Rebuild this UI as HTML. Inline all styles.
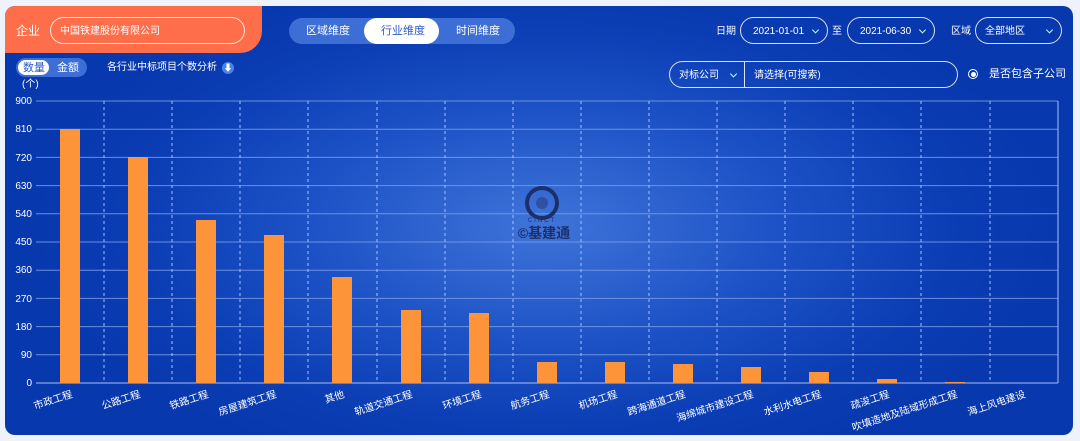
<!DOCTYPE html>
<html><head><meta charset="utf-8"><style>
body{margin:0;width:1080px;height:441px;background:#eef3fb;font-family:"Liberation Sans","Noto Sans CJK SC",sans-serif;overflow:hidden;position:relative}
.card{position:absolute;left:5px;top:6px;width:1068px;height:429px;border-radius:10px;background:radial-gradient(ellipse 520px 260px at 540px 220px,#3f74d9 0%,#1d52c6 45%,#0a3cb3 80%,#0838ad 100%);overflow:hidden}
.org{position:absolute;left:5px;top:6px;width:257px;height:47px;background:#fe6e4a;border-bottom-right-radius:22px;border-top-left-radius:10px}
.abs{position:absolute;color:#fff;font-size:11px;line-height:1}
.pill{position:absolute;border:1px solid rgba(255,255,255,.85);border-radius:14px;box-sizing:border-box;color:#fff;font-size:10px;line-height:1}
.arr{position:absolute;right:9px;top:50%;width:4px;height:4px;border-right:1px solid #cfe;border-bottom:1px solid #cfe;transform:translateY(-70%) rotate(45deg)}
</style></head><body>
<div class="card"></div>
<div class="org"></div>
<div class="abs" style="left:16px;top:25px;font-size:12px">企业</div>
<div class="pill" style="left:50px;top:17px;width:195px;height:27px"><span style="position:absolute;left:9px;top:9px">中国铁建股份有限公司</span></div>
<div style="position:absolute;left:289px;top:18px;width:226px;height:26px;border-radius:13px;background:#3c6ed6"></div>
<div style="position:absolute;left:364px;top:18px;width:75px;height:26px;border-radius:13px;background:#fff"></div>
<div class="abs" style="left:306px;top:26px">区域维度</div>
<div class="abs" style="left:381px;top:26px;color:#2a5ac8">行业维度</div>
<div class="abs" style="left:456px;top:26px">时间维度</div>
<div class="abs" style="left:716px;top:27px;font-size:10px">日期</div>
<div class="pill" style="left:740px;top:17px;width:88px;height:27px"><span style="position:absolute;left:12px;top:9px">2021-01-01</span><i class="arr"></i></div>
<div class="abs" style="left:832px;top:27px;font-size:10px">至</div>
<div class="pill" style="left:847px;top:17px;width:88px;height:27px"><span style="position:absolute;left:12px;top:9px">2021-06-30</span><i class="arr"></i></div>
<div class="abs" style="left:951px;top:27px;font-size:10px">区域</div>
<div class="pill" style="left:975px;top:17px;width:87px;height:27px"><span style="position:absolute;left:9px;top:9px">全部地区</span><i class="arr"></i></div>
<div style="position:absolute;left:16px;top:58px;width:71px;height:19px;border-radius:10px;background:#3c6ed6"></div>
<div style="position:absolute;left:18px;top:60px;width:31px;height:15px;border-radius:8px;background:#fff"></div>
<div class="abs" style="left:23px;top:63px;color:#2a5ac8">数量</div>
<div class="abs" style="left:57px;top:63px">金额</div>
<div class="abs" style="left:107px;top:63px;font-size:10px">各行业中标项目个数分析</div>
<div style="position:absolute;left:222px;top:62px;width:12px;height:12px;border-radius:6px;background:#4a82ee;color:#fff;font-size:9px;line-height:12px;text-align:center">⬇</div>
<div class="abs" style="left:22px;top:80px;font-size:10px">(个)</div>
<div class="pill" style="left:669px;top:61px;width:289px;height:27px"><span style="position:absolute;left:9px;top:9px">对标公司</span><i class="arr" style="right:auto;left:61px"></i><span style="position:absolute;left:74px;top:0;width:1px;height:25px;background:rgba(255,255,255,.85)"></span><span style="position:absolute;left:84px;top:9px">请选择(可搜索)</span></div>
<div style="position:absolute;left:968px;top:69px;width:8px;height:8px;border:1.5px solid #fff;border-radius:50%"></div>
<div style="position:absolute;left:971px;top:72px;width:5px;height:5px;background:#fff;border-radius:50%"></div>
<div class="abs" style="left:989px;top:69px;font-size:11px">是否包含子公司</div>
<svg width="1080" height="441" style="position:absolute;left:0;top:0" font-family="Liberation Sans,Noto Sans CJK SC,sans-serif">
<g stroke="#7a9de6" stroke-width="1" opacity=".85">
<line x1="36" x2="1058" y1="101" y2="101"/><line x1="36" x2="1058" y1="129.2" y2="129.2"/><line x1="36" x2="1058" y1="157.4" y2="157.4"/><line x1="36" x2="1058" y1="185.6" y2="185.6"/><line x1="36" x2="1058" y1="213.8" y2="213.8"/><line x1="36" x2="1058" y1="242" y2="242"/><line x1="36" x2="1058" y1="270.2" y2="270.2"/><line x1="36" x2="1058" y1="298.4" y2="298.4"/><line x1="36" x2="1058" y1="326.6" y2="326.6"/><line x1="36" x2="1058" y1="354.8" y2="354.8"/>
</g>
<g stroke="#a8c0f0" stroke-dasharray="3,3">
<line x1="104" x2="104" y1="101" y2="383"/><line x1="172" x2="172" y1="101" y2="383"/><line x1="240" x2="240" y1="101" y2="383"/><line x1="308" x2="308" y1="101" y2="383"/><line x1="377" x2="377" y1="101" y2="383"/><line x1="445" x2="445" y1="101" y2="383"/><line x1="513" x2="513" y1="101" y2="383"/><line x1="581" x2="581" y1="101" y2="383"/><line x1="649" x2="649" y1="101" y2="383"/><line x1="717" x2="717" y1="101" y2="383"/><line x1="785" x2="785" y1="101" y2="383"/><line x1="853" x2="853" y1="101" y2="383"/><line x1="921" x2="921" y1="101" y2="383"/><line x1="990" x2="990" y1="101" y2="383"/>
</g>
<line x1="1058" x2="1058" y1="101" y2="383" stroke="#a8c0f0"/>
<line x1="36" x2="1058" y1="383" y2="383" stroke="#a8c0f0"/>
<g fill="#fff" font-size="10" text-anchor="end">
<text x="32" y="104">900</text><text x="32" y="132">810</text><text x="32" y="161">720</text><text x="32" y="189">630</text><text x="32" y="217">540</text><text x="32" y="245">450</text><text x="32" y="273">360</text><text x="32" y="302">270</text><text x="32" y="330">180</text><text x="32" y="358">90</text><text x="32" y="386">0</text>
</g>
<g fill="#fd943a">
<rect x="60" y="129" width="20" height="254"/><rect x="128" y="157" width="20" height="226"/><rect x="196" y="220" width="20" height="163"/><rect x="264" y="235" width="20" height="148"/><rect x="332" y="277" width="20" height="106"/><rect x="401" y="310" width="20" height="73"/><rect x="469" y="313" width="20" height="70"/><rect x="537" y="362" width="20" height="21"/><rect x="605" y="362" width="20" height="21"/><rect x="673" y="364" width="20" height="19"/><rect x="741" y="367" width="20" height="16"/><rect x="809" y="372" width="20" height="11"/><rect x="877" y="379" width="20" height="4"/><rect x="945" y="382" width="20" height="1"/>
</g>
<g fill="#fff" font-size="10" text-anchor="end">
<text transform="translate(73,397) rotate(-18)">市政工程</text>
<text transform="translate(141,397) rotate(-18)">公路工程</text>
<text transform="translate(209,397) rotate(-18)">铁路工程</text>
<text transform="translate(277,397) rotate(-18)">房屋建筑工程</text>
<text transform="translate(345,397) rotate(-18)">其他</text>
<text transform="translate(413,397) rotate(-18)">轨道交通工程</text>
<text transform="translate(482,397) rotate(-18)">环境工程</text>
<text transform="translate(550,397) rotate(-18)">航务工程</text>
<text transform="translate(618,397) rotate(-18)">机场工程</text>
<text transform="translate(686,397) rotate(-18)">跨海通道工程</text>
<text transform="translate(754,397) rotate(-18)">海绵城市建设工程</text>
<text transform="translate(822,397) rotate(-18)">水利水电工程</text>
<text transform="translate(890,397) rotate(-18)">疏浚工程</text>
<text transform="translate(958,397) rotate(-18)">吹填造地及陆域形成工程</text>
<text transform="translate(1026,397) rotate(-18)">海上风电建设</text>
</g>
<circle cx="542" cy="203" r="15" fill="none" stroke="#1c2f6a" stroke-width="4"/>
<circle cx="542" cy="203" r="6" fill="#2a3e80" opacity=".6"/>
<text x="542" y="222" fill="#1c2f6a" font-size="6" text-anchor="middle" letter-spacing="2">CINCT</text>
<text x="544" y="238" fill="#1c2f6a" font-size="14" font-weight="bold" text-anchor="middle">©基建通</text>
</svg>
</body></html>
